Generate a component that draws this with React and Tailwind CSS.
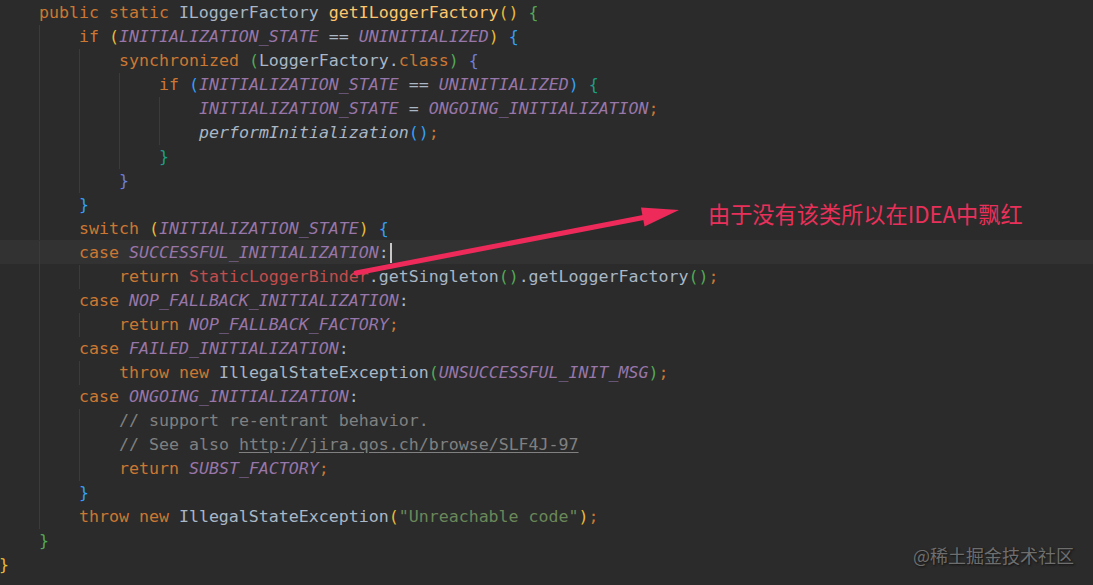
import React from 'react'

const C = {
  k: 'text-[#cc7832]',
  c: 'text-[#9876aa] italic',
  t: 'text-[#a9b7c6]',
  ti: 'text-[#a9b7c6] italic',
  m: 'text-[#ffc66d]',
  cm: 'text-[#808080]',
  u: 'text-[#808080] underline underline-offset-2',
  s: 'text-[#6a8759]',
  r: 'text-[#c24d4d]',
  by: 'text-[#e8ba36]',
  bg: 'text-[#54a857]',
  bb: 'text-[#359ff4]',
  bi: 'text-[#6e7ed9]',
  bt: 'text-[#1f9e84]',
}

// [indent units, tokens]
const lines = [
  [1, [['k', 'public static '], ['t', 'ILoggerFactory '], ['m', 'getILoggerFactory'], ['by', '()'], ['t', ' '], ['bg', '{']]],
  [2, [['k', 'if '], ['by', '('], ['c', 'INITIALIZATION_STATE'], ['t', ' == '], ['c', 'UNINITIALIZED'], ['by', ')'], ['t', ' '], ['bb', '{']]],
  [3, [['k', 'synchronized '], ['bg', '('], ['t', 'LoggerFactory.'], ['k', 'class'], ['bg', ')'], ['t', ' '], ['bi', '{']]],
  [4, [['k', 'if '], ['bb', '('], ['c', 'INITIALIZATION_STATE'], ['t', ' == '], ['c', 'UNINITIALIZED'], ['bb', ')'], ['t', ' '], ['bt', '{']]],
  [5, [['c', 'INITIALIZATION_STATE'], ['t', ' = '], ['c', 'ONGOING_INITIALIZATION'], ['k', ';']]],
  [5, [['ti', 'performInitialization'], ['bb', '()'], ['k', ';']]],
  [4, [['bt', '}']]],
  [3, [['bi', '}']]],
  [2, [['bb', '}']]],
  [2, [['k', 'switch '], ['by', '('], ['c', 'INITIALIZATION_STATE'], ['by', ')'], ['t', ' '], ['bb', '{']]],
  [2, [['k', 'case '], ['c', 'SUCCESSFUL_INITIALIZATION'], ['t', ':']], true],
  [3, [['k', 'return '], ['r', 'StaticLoggerBinder'], ['t', '.getSingleton'], ['bg', '()'], ['t', '.getLoggerFactory'], ['bg', '()'], ['k', ';']]],
  [2, [['k', 'case '], ['c', 'NOP_FALLBACK_INITIALIZATION'], ['t', ':']]],
  [3, [['k', 'return '], ['c', 'NOP_FALLBACK_FACTORY'], ['k', ';']]],
  [2, [['k', 'case '], ['c', 'FAILED_INITIALIZATION'], ['t', ':']]],
  [3, [['k', 'throw new '], ['t', 'IllegalStateException'], ['bg', '('], ['c', 'UNSUCCESSFUL_INIT_MSG'], ['bg', ')'], ['k', ';']]],
  [2, [['k', 'case '], ['c', 'ONGOING_INITIALIZATION'], ['t', ':']]],
  [3, [['cm', '// support re-entrant behavior.']]],
  [3, [['cm', '// See also '], ['u', 'http://jira.qos.ch/browse/SLF4J-97']]],
  [3, [['k', 'return '], ['c', 'SUBST_FACTORY'], ['k', ';']]],
  [2, [['bb', '}']]],
  [2, [['k', 'throw new '], ['t', 'IllegalStateException'], ['by', '('], ['s', '"Unreachable code"'], ['by', ')'], ['k', ';']]],
  [1, [['bg', '}']]],
  [0, [['by', '}']]],
]

function Line({ indent, tokens, current }) {
  return (
    <div className={`flex h-[24px] items-center whitespace-pre pt-px ${current ? 'bg-[#323232]' : ''}`}>
      {Array.from({ length: indent }).map((_, i) => (
        <span
          key={i}
          className={`h-[24px] w-[40px] shrink-0 ${i > 0 ? 'border-l border-[#3b3b3b]' : ''}`}
        />
      ))}
      {tokens.map(([kind, text], i) => (
        <span key={i} className={C[kind]}>{text}</span>
      ))}
      {current && <span className="ml-px inline-block h-[20px] w-[2px] bg-[#c8c8c8]" />}
    </div>
  )
}

export default function App() {
  return (
    <div className="relative h-[585px] w-[1093px] overflow-hidden bg-[#2b2b2b]">
      <div className="-ml-px flex flex-col font-['DejaVu_Sans_Mono',monospace] text-[16.6px] leading-[24px]">
        {lines.map(([indent, tokens, current], i) => (
          <Line key={i} indent={indent} tokens={tokens} current={current} />
        ))}
      </div>

      {/* annotation arrow */}
      <svg className="absolute left-0 top-0" width="1093" height="585">
        <line x1="356" y1="273" x2="646" y2="217" stroke="#ee2a5a" strokeWidth="5" strokeLinecap="round" />
        <polygon points="679,210 641,207.5 644.5,226.5" fill="#ee2a5a" />
      </svg>
      <div className="absolute left-[708px] top-[200px] font-['Noto_Sans_CJK_SC','Noto_Sans',sans-serif] text-[22.2px] leading-[26px] text-[#e8305a]">
        由于没有该类所以在IDEA中飘红
      </div>

      <div className="absolute left-[913px] top-[543px] font-['Noto_Sans_CJK_SC','Noto_Sans',sans-serif] text-[18px] leading-[24px] text-[#6e6e6e] [text-shadow:1px_1px_2px_#111]">
        @稀土掘金技术社区
      </div>
    </div>
  )
}
